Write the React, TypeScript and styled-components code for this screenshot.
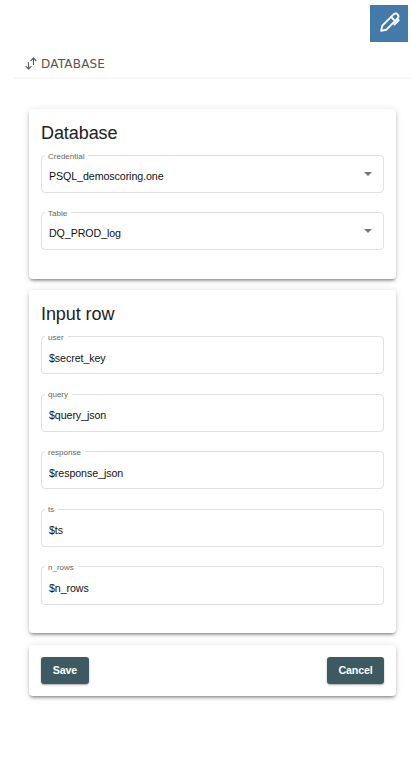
import React from "react";
import styled, { createGlobalStyle } from "styled-components";

const GlobalStyle = createGlobalStyle`
  * { box-sizing: border-box; }
  body { margin: 0; background: #fff; font-family: "Liberation Sans", Arial, sans-serif; overflow: hidden; }
`;

const Page = styled.main`
  display: flex;
  flex-direction: column;
  height: 765px;
`;

const TopBar = styled.div`
  display: flex;
  justify-content: flex-end;
  padding: 5px 3px 0 0;
  height: 49px;
`;

const EditButton = styled.button`
  display: flex;
  align-items: center;
  justify-content: center;
  width: 38px;
  height: 37px;
  padding: 0 0 4px 1px;
  border: 0;
  background: #447aaa;
  color: #fff;
`;

const Header = styled.header`
  display: flex;
  align-items: center;
  gap: 4px;
  height: 30px;
  margin-left: 14px;
  padding: 1px 0 0 11px;
  border-bottom: 2px solid #f8f8f8;
  color: #555;
  font: 12px/16px "DejaVu Sans", sans-serif;
`;

const HeaderText = styled.span`
  letter-spacing: 0.2px;
`;

const Content = styled.form`
  display: flex;
  flex-direction: column;
  padding: 30px 15px 0 29px;
`;

const Card = styled.section<{ $height: number; $gap?: number }>`
  height: ${(p) => p.$height}px;
  margin-bottom: ${(p) => p.$gap ?? 0}px;
  padding: 12px;
  border-radius: 4px;
  background: #fff;
  box-shadow: 0 3px 3px -2px rgba(0, 0, 0, 0.3), 0 2px 3px 0 rgba(0, 0, 0, 0.16), 0 1px 7px 0 rgba(0, 0, 0, 0.14);
`;

const Title = styled.h2`
  margin: 0;
  height: 34px;
  font-size: 18px;
  line-height: 24px;
  letter-spacing: -0.08px;
  font-weight: 400;
  color: #212121;
`;

const Field = styled.div<{ $select?: boolean }>`
  position: relative;
  display: flex;
  align-items: center;
  justify-content: space-between;
  height: ${(p) => (p.$select ? 38 : 38.3)}px;
  margin-bottom: 19.3px;
  padding: ${(p) => (p.$select ? 4 : 5)}px 11px 0 7px;
  border: 1px solid #e0e0e0;
  border-radius: 4px;
`;

const Label = styled.label`
  position: absolute;
  top: -4.4px;
  left: 3px;
  padding: 0 4px 0 3px;
  background: #fff;
  color: #666;
  font-size: 8px;
  line-height: 10px;
`;

const Value = styled.span`
  font-size: 10.67px;
  line-height: 14px;
  letter-spacing: -0.08px;
  color: #111;
`;

const Caret = styled.span`
  border: 4px solid transparent;
  border-top-color: #757575;
  border-bottom: 0;
  margin-bottom: 5px;
`;

const Actions = styled(Card)`
  display: flex;
  align-items: flex-start;
  justify-content: space-between;
`;

const ActionButton = styled.button<{ $width: number }>`
  width: ${(p) => p.$width}px;
  height: 27px;
  padding: 0;
  border: 0;
  border-radius: 3px;
  background: #3d5a63;
  color: #fff;
  font: bold 10.67px/27px "Liberation Sans", Arial, sans-serif;
  letter-spacing: -0.15px;
  box-shadow: 0 1px 2px rgba(0, 0, 0, 0.35);
`;

const PenIcon = () => (
  <svg width="22" height="22" viewBox="0 0 22 22" fill="none" stroke="currentColor" strokeWidth="1.9" strokeLinejoin="round" strokeLinecap="round">
    <path d="M2.1 19.9 3.3 14.6 14.1 3.8Q16.6 1.3 18.6 3.4T18.2 7.9L7.4 18.7Z" />
    <path d="m12 5.9 4.1 4.1M18.2 7.9 19.7 9.3 15.4 13.6" />
  </svg>
);

const SwapIcon = () => (
  <svg width="12" height="13" viewBox="0 0 12 13" fill="none" stroke="#555" strokeWidth="1.1">
    <path d="M3.5 5.2V11.8M.7 9.1l2.8 2.8 2.9-2.8" />
    <path d="M8.5 8V1.2M5.6 4 8.5 1.1 11.4 4" />
  </svg>
);

type FieldData = { label: string; value: string; select?: boolean };

const databaseFields: FieldData[] = [
  { label: "Credential", value: "PSQL_demoscoring.one", select: true },
  { label: "Table", value: "DQ_PROD_log", select: true },
];

const inputFields: FieldData[] = [
  { label: "user", value: "$secret_key" },
  { label: "query", value: "$query_json" },
  { label: "response", value: "$response_json" },
  { label: "ts", value: "$ts" },
  { label: "n_rows", value: "$n_rows" },
];

const OutlinedField = ({ label, value, select }: FieldData) => (
  <Field $select={select}>
    <Label>{label}</Label>
    <Value>{value}</Value>
    {select && <Caret />}
  </Field>
);

export default function App() {
  return (
    <>
      <GlobalStyle />
      <Page>
        <TopBar>
          <EditButton type="button" aria-label="Edit"><PenIcon /></EditButton>
        </TopBar>
        <Header>
          <SwapIcon />
          <HeaderText>DATABASE</HeaderText>
        </Header>
        <Content>
          <Card $height={170} $gap={11}>
            <Title>Database</Title>
            {databaseFields.map((f) => <OutlinedField key={f.label} {...f} />)}
          </Card>
          <Card $height={343} $gap={12}>
            <Title>Input row</Title>
            {inputFields.map((f) => <OutlinedField key={f.label} {...f} />)}
          </Card>
          <Actions $height={51}>
            <ActionButton type="button" $width={48}>Save</ActionButton>
            <ActionButton type="button" $width={57}>Cancel</ActionButton>
          </Actions>
        </Content>
      </Page>
    </>
  );
}
